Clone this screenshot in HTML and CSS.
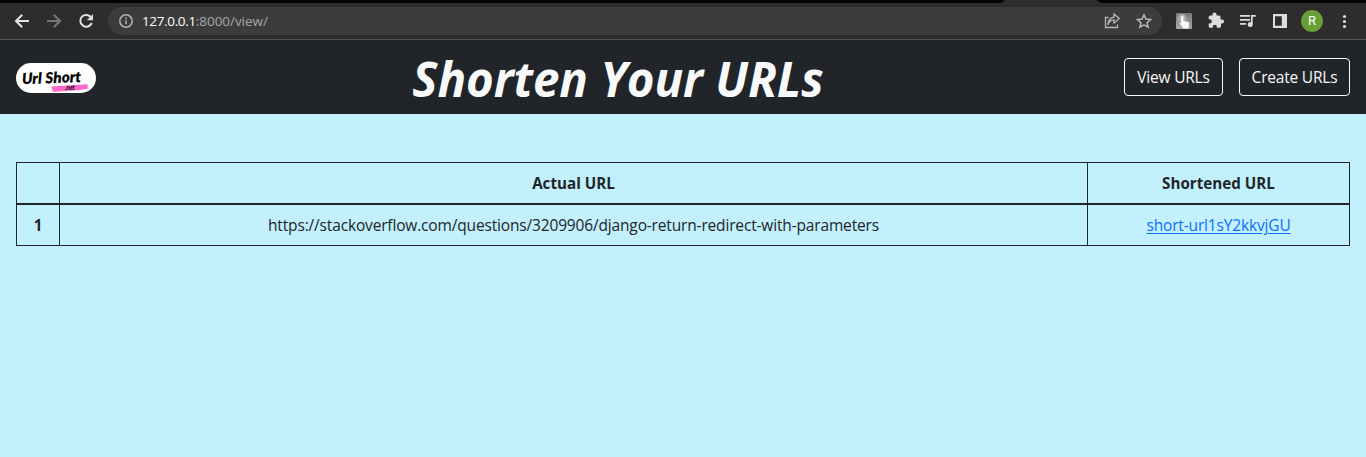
FILE: index.html
```html
<!DOCTYPE html>
<html lang="en">
<head>
<meta charset="utf-8">
<title>Shorten Your URLs</title>
<link rel="stylesheet" href="styles.css">
</head>
<body>
<div class="tabstrip"><svg width="108" height="3" viewBox="0 0 108 3"><path class="tab" d="M0 3q5 0 6-3h93q2 3 7 3z"/></svg></div>
<div class="toolbar">
  <svg class="nav" viewBox="0 0 100 36" fill="none">
    <path class="bright" d="M29 18H16.500M22.200 11.800L16 18l6.200 6.200"/>
    <path class="faded" d="M47 18h12.500M53.800 11.800L60 18l-6.200 6.200"/>
    <path class="bright" d="M91.200 14.600A5.900 5.900 0 1 0 91.700 20"/>
    <path class="solid" d="M93 11v6.200h-6.200z"/>
  </svg>
  <div class="omnibox">
    <svg class="info" viewBox="0 0 14 14" fill="none"><circle cx="7" cy="7" r="6.200"/><path d="M7 6.200v4M7 3.500v1.500"/></svg>
    <span class="address"><b>127.0.0.1</b><span>:8000/view/</span></span>
    <svg class="page-actions" viewBox="0 0 50 20" fill="none">
      <path d="M4.500 6.500H1.500v10h12v-3M4 14c.6-3.600 2.800-5 6-5.200V12l5.200-4.600L10 3v3.200C6.200 6.700 4.200 9.500 4 14z"/>
      <path class="star" d="M40 3.800l1.900 4.300 4.700.45-3.500 3.100 1 4.600-4.100-2.400-4.100 2.400 1-4.600-3.500-3.100 4.700-.45z"/>
    </svg>
  </div>
  <svg class="extensions" viewBox="1162 3 204 36" fill="none">
    <defs><linearGradient id="tile" x2="0" y2="1"><stop stop-color="#777"/><stop offset="1" stop-color="#aaa"/></linearGradient></defs>
    <rect x="1176" y="13" width="16" height="16" rx="1" fill="url(#tile)"/>
    <circle cx="1182" cy="18.500" r="4.500" fill="#aaa"/>
    <path d="M1181 17q0-1.500 1.200-1.500t1.200 1.500v4l4.800 1q1 .3.900 1.500l-.6 5h-5l-4-5q.5-1 1.500-.4z" fill="#f6fafd"/>
    <path class="solid" d="M1221.500 19.500h-1V17q0-1.500-1.500-1.500h-2.500v-1a2 2 0 0 0-4 0v1H1210q-1.300 0-1.300 1.500v2.300h1a2 2 0 0 1 0 4.200h-1v2.800q0 1.500 1.500 1.500h2.600v-1a2 2 0 0 1 4 0v1h2.700q1.500 0 1.500-1.500v-2.800h1a2 2 0 0 0 0-4z"/>
    <path class="line" d="M1240 15.900h10M1240 19.900h10M1240 23.900h6M1251.800 24v-8.100h4"/>
    <circle class="solid" cx="1250.200" cy="24.600" r="2.500"/>
    <path class="solid" fill-rule="evenodd" d="M1273 14h14v14h-14zM1275 16.200v9.600h6.800v-9.600z"/>
    <circle cx="1312" cy="21" r="11" fill="#689f38"/>
    <text class="initial" x="1312" y="25.300">R</text>
    <g class="solid"><circle cx="1344.500" cy="16.500" r="1.600"/><circle cx="1344.500" cy="21.500" r="1.600"/><circle cx="1344.500" cy="26.500" r="1.600"/></g>
  </svg>
</div>
<header class="site-header">
  <svg class="logo" viewBox="0 0 80 30">
    <rect width="80" height="30" rx="15" fill="#fff"/>
    <path d="M35 23.500l19-1.300 18-.9-1 1.500 2.300.5-2 1.300 1 .8-8 1.700-28 1.800 1-1.600-2.500-.7 1.700-.8z" fill="#ff69cb"/>
    <text class="logo-name" x="6" y="20" textLength="59" lengthAdjust="spacing" transform="rotate(-2 35 15)">Url Short</text>
    <text class="logo-sub" x="49" y="26.800" textLength="10">.net</text>
  </svg>
  <h1 class="title">Shorten Your URLs</h1>
  <nav class="links"><a class="btn view">View URLs</a><a class="btn create">Create URLs</a></nav>
</header>
<main class="content">
  <table class="urls">
    <thead><tr><th class="index"></th><th class="actual">Actual URL</th><th class="short">Shortened URL</th></tr></thead>
    <tbody><tr><th>1</th><td><span class="long-url">https://stackoverflow.com/questions/3209906/django-return-redirect-with-parameters</span></td><td><a class="short-url" href="#">short-url1sY2kkvjGU</a></td></tr></tbody>
  </table>
</main>
</body>
</html>
```
FILE: styles.css
```css
* { box-sizing: border-box; }
body {
  margin: 0;
  min-height: 457px;
  background: #c2f0fc;
  color: #212529;
  font-family: "Open Sans", "Noto Sans", sans-serif;
  font-size: 15.5px;
  overflow: hidden;
}
svg { display: block; flex: none; }
.tabstrip { height: 3px; background: #000; padding-left: 998px; }
.tab { fill: #2d2d2d; }
.toolbar {
  display: flex;
  align-items: center;
  height: 37px;
  background: #2d2d2d;
  border-bottom: 1px solid #555;
}
.nav { width: 100px; height: 36px; margin-right: 8px; stroke-width: 2; }
.bright { stroke: #e2e2e2; }
.faded { stroke: #777; }
.solid { fill: #dedede; }
.omnibox {
  display: flex;
  align-items: center;
  width: 1054px;
  height: 28px;
  padding: 0 8px 0 11px;
  border-radius: 14px;
  background: #3c3c3c;
}
.info { width: 14px; height: 14px; stroke: #b0b3b6; stroke-width: 1.5; }
.address {
  flex: 1;
  margin-left: 9px;
  font-size: 13.5px;
  line-height: 18px;
  color: #a6a9ac;
  letter-spacing: -.05px;
}
.address b { font-weight: 500; color: #fff; letter-spacing: -.35px; }
.page-actions { width: 50px; height: 20px; stroke: #b5b5b5; stroke-width: 1.3; }
.star { stroke-width: 1.5; }
.extensions { width: 204px; height: 36px; }
.line { stroke: #dedede; stroke-width: 1.7; }
.initial { font: 13px Roboto, sans-serif; fill: #fff; text-anchor: middle; }
.site-header {
  display: flex;
  align-items: center;
  justify-content: space-between;
  height: 74px;
  padding: 0 16px;
  background: #212529;
}
.logo { width: 80px; height: 30px; margin-top: 2px; }
.logo-name { font: italic 900 15px Lato, sans-serif; fill: #000; stroke: #000; stroke-width: .3; }
.logo-sub { font: italic 900 6.5px Lato, sans-serif; fill: #311426; }
.title {
  margin: 4px 0 0 16px;
  font-size: 47.5px;
  line-height: 58px;
  font-style: italic;
  font-weight: 700;
  color: #f8f9fa;
  letter-spacing: -.1px;
  white-space: nowrap;
}
.links { display: flex; gap: 16px; }
.btn {
  height: 38px;
  border: 1px solid #f8f9fa;
  border-radius: 4px;
  color: #f8f9fa;
  line-height: 37px;
  letter-spacing: -.2px;
  text-align: center;
  white-space: nowrap;
}
.view { width: 99px; }
.create { width: 111px; }
.content { padding: 48px 16px; }
.urls {
  width: 1334px;
  table-layout: fixed;
  border: 1px solid #212529;
  border-spacing: 0;
  text-align: center;
}
.urls th, .urls td { height: 40px; padding: 0; line-height: 24px; white-space: nowrap; }
.urls th { font-size: 15.2px; }
.urls td { letter-spacing: -.16px; }
.urls thead th { height: 42px; border-bottom: 2px solid #212529; }
.urls tr > * + * { border-left: 1px solid #212529; }
.index { width: 42px; }
.actual { width: 1028px; }
.short { width: 262px; }
.short-url { color: #0d6efd; text-underline-offset: 2px; }
```
